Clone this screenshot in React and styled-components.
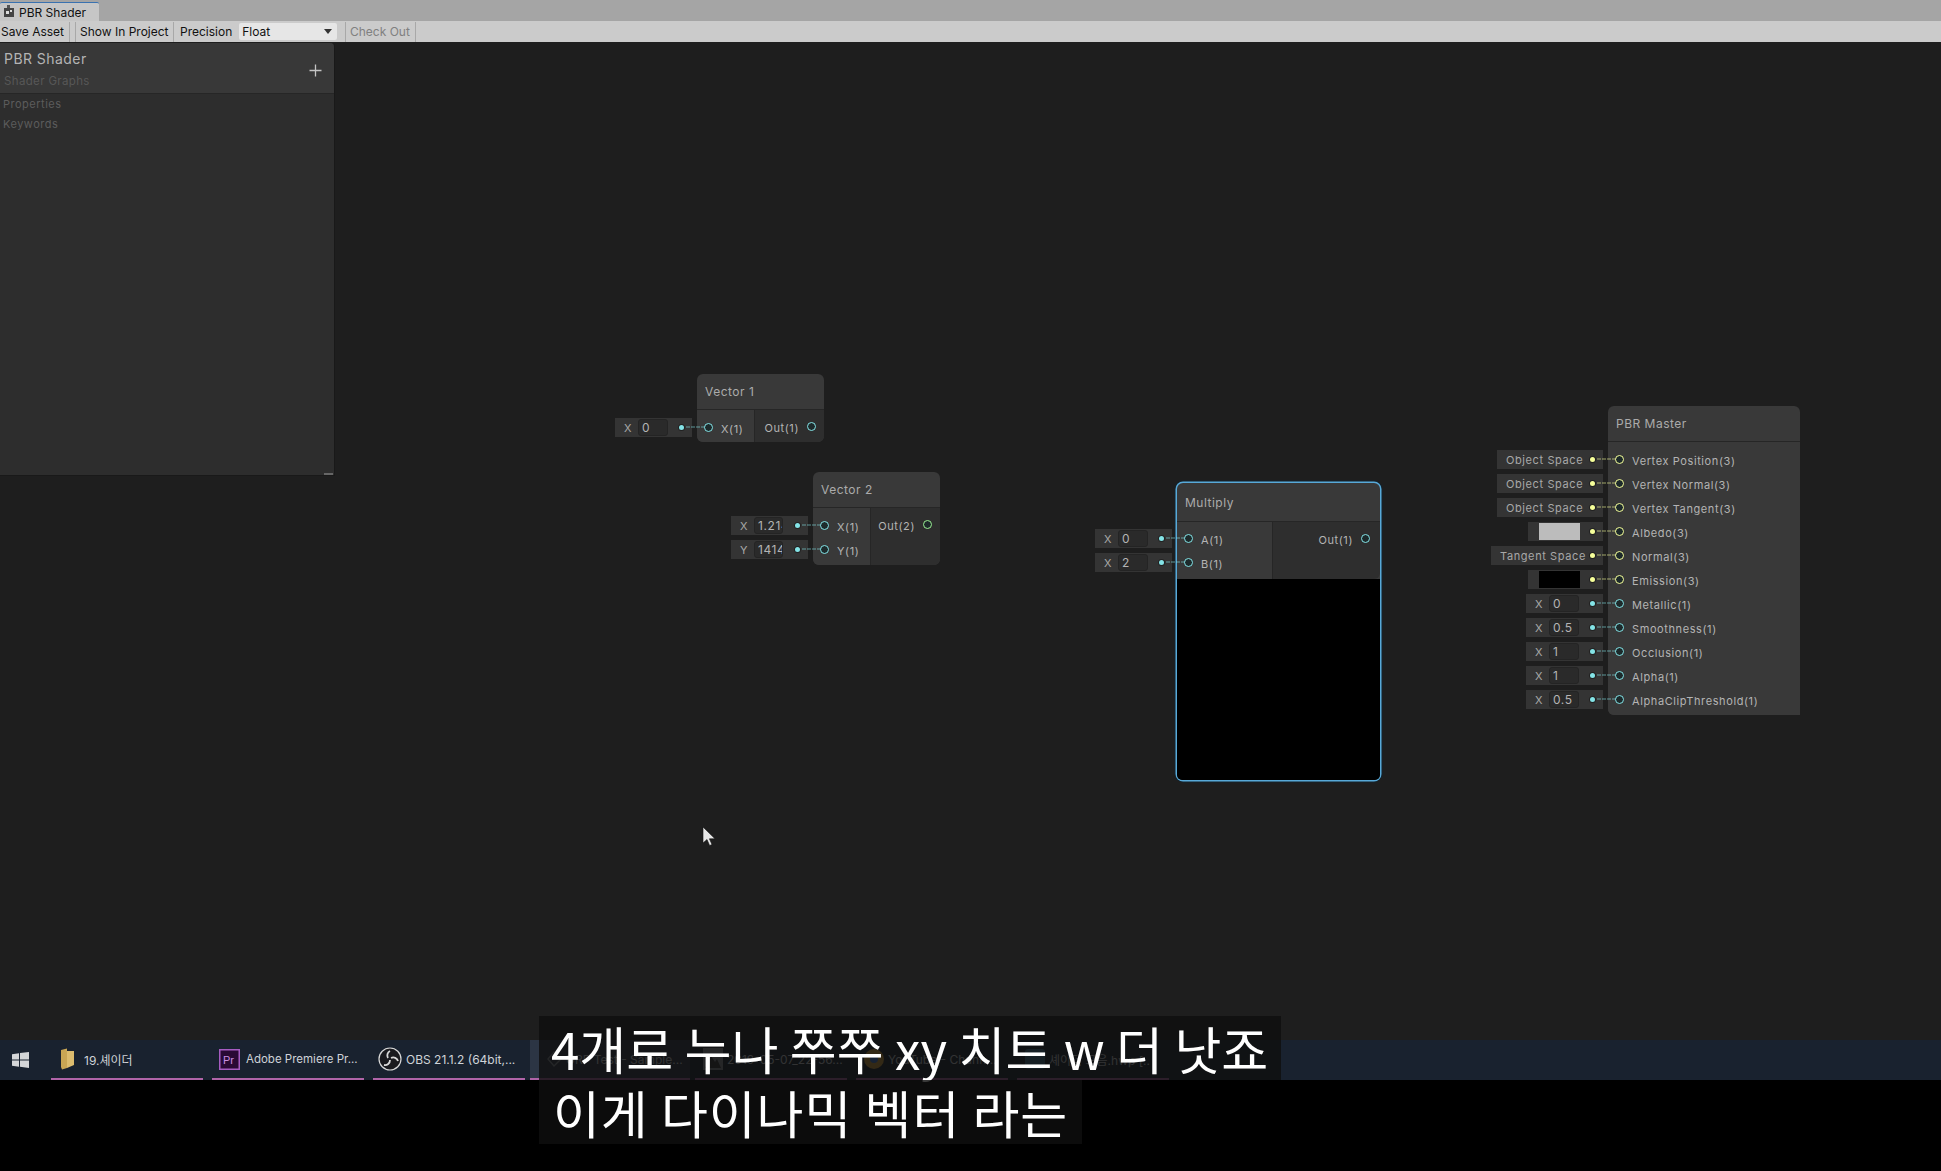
import React from 'react'
import styled, { createGlobalStyle, css } from 'styled-components'

const GlobalStyle = createGlobalStyle`
  html, body { margin: 0; padding: 0; background: #000; }
  * { box-sizing: border-box; }
`

const TEAL = '#84e4e7'
const YELLOW = '#f6ff9a'
const GREEN = '#9aef92'

const Page = styled.div`
  position: relative;
  width: 1941px;
  height: 1171px;
  display: flex;
  flex-direction: column;
  overflow: hidden;
  background: #000;
  font-family: Inter, 'Liberation Sans', 'Noto Sans CJK KR', sans-serif;
`

const TitleBar = styled.div`
  height: 21px;
  flex: none;
  background: #a5a5a5;
  padding-top: 2px;
  display: flex;
`

const Tab = styled.div`
  width: 99px;
  height: 19px;
  background: #c6c6c6;
  border-top: 1px solid #3a72b0;
  border-radius: 2px 2px 0 0;
  display: flex;
  align-items: center;
  gap: 4px;
  padding-left: 4px;
  font-size: 12px;
  color: #111;
`

const Toolbar = styled.div`
  height: 21px;
  flex: none;
  background: #cbcbcb;
  display: flex;
  align-items: center;
  font-size: 12px;
  color: #111;
  white-space: nowrap;
`

const ToolButton = styled.div`
  height: 20px;
  flex: none;
  display: flex;
  align-items: center;
  padding: 0 ${(p) => p.$pad || 5}px;
  width: ${(p) => p.$width}px;
  border-right: 1px solid #a8a8a8;
  color: ${(p) => (p.$disabled ? '#808080' : '#111')};
`

const Gap = styled.div`
  width: ${(p) => p.$width}px;
  flex: none;
  height: 20px;
  border-right: ${(p) => (p.$line ? '1px solid #a8a8a8' : 'none')};
`

const Select = styled.div`
  width: 98px;
  flex: none;
  height: 17px;
  margin-left: 7px;
  background: #e6e6e6;
  border-radius: 2px;
  display: flex;
  align-items: center;
  justify-content: space-between;
  padding: 0 5px 0 3px;
`

const Caret = styled.div`
  width: 0;
  height: 0;
  border-left: 4px solid transparent;
  border-right: 4px solid transparent;
  border-top: 5px solid #333;
`

const Canvas = styled.div`
  position: relative;
  flex: 1;
  background: #1e1e1e;
`

const Blackboard = styled.div`
  position: absolute;
  left: 0;
  top: 1px;
  width: 335px;
  height: 433px;
  background: #2d2d2d;
  border-right: 1px solid #191919;
  border-bottom: 1px solid #191919;
  border-radius: 0 4px 0 0;
`

const BoardHead = styled.div`
  position: relative;
  height: 51px;
  background: #383838;
  border-bottom: 1px solid #262626;
  border-radius: 0 4px 0 0;
  padding: 6px 4px;
`

const BoardTitle = styled.div`
  font-size: 14px;
  line-height: 19px;
  letter-spacing: 0.45px;
  color: #b4b4b4;
`

const BoardSub = styled.div`
  margin-top: 6px;
  font-size: 11.5px;
  line-height: 14px;
  letter-spacing: 0.35px;
  color: #575757;
`

const PlusIcon = styled.svg`
  position: absolute;
  right: 12px;
  top: 21px;
`

const BoardList = styled.div`
  display: flex;
  flex-direction: column;
  gap: 6px;
  padding: 3px 3px;
`

const BoardItem = styled.div`
  font-size: 11px;
  line-height: 14px;
  letter-spacing: 0.5px;
  color: #5c5c5c;
`

const ResizeGrip = styled.div`
  position: absolute;
  right: 1px;
  bottom: 0;
  width: 9px;
  height: 2px;
  background: #666;
`

const Node = styled.div`
  position: absolute;
  left: ${(p) => p.$x}px;
  top: ${(p) => p.$y}px;
  width: ${(p) => p.$w}px;
  background: #393939;
  border-radius: 6px;
  color: #b4b4b4;
  font-size: 11px;
  letter-spacing: 0.6px;
  ${(p) =>
    p.$selected &&
    css`
      box-shadow: 0 0 0 1.5px #58a9d8, 0 0 0 2.5px #14232c;
    `}
`

const NodeTitle = styled.div`
  height: ${(p) => p.$h || 36}px;
  display: flex;
  align-items: center;
  padding-left: 8px;
  font-size: 12px;
  letter-spacing: 0.5px;
  color: #ababab;
  border-bottom: 1px solid #262626;
`

const NodeBody = styled.div`
  display: flex;
  border-radius: 0 0 6px 6px;
  overflow: visible;
`

const Inputs = styled.div`
  width: ${(p) => (p.$w ? `${p.$w}px` : 'auto')};
  flex: ${(p) => (p.$w ? 'none' : 1)};
  padding: ${(p) => p.$pad || 4}px 0 ${(p) => p.$bottom || 0}px;
  background: #393939;
  border-radius: 0 0 0 6px;
`

const Outputs = styled.div`
  flex: 1;
  padding: ${(p) => p.$top || 4}px ${(p) => p.$right || 0}px 0 0;
  background: #2e2e2e;
  border-left: 1px solid #262626;
  border-radius: 0 0 6px 0;
`

const Row = styled.div`
  position: relative;
  height: 24px;
  display: flex;
  align-items: center;
  justify-content: ${(p) => (p.$out ? 'flex-end' : 'flex-start')};
  gap: 8px;
  padding: ${(p) => (p.$out ? '0 8px 0 0' : '0 0 0 7px')};
`

const Ring = styled.div`
  width: 9px;
  height: 9px;
  margin-top: -2px;
  border-radius: 50%;
  border: 1.5px solid ${(p) => p.$color};
  background: #1d2a2b;
  flex: none;
`

const Label = styled.span`
  white-space: nowrap;
  padding-top: 2px;
`

const Field = styled.div`
  position: absolute;
  right: calc(100% + 5px);
  top: 2px;
  width: ${(p) => p.$w}px;
  height: 19px;
  background: #343434;
  display: flex;
  align-items: center;
  font-size: 11px;
  color: #a8a8a8;
`

const Axis = styled.span`
  width: 23px;
  flex: none;
  text-align: center;
  padding-left: 3px;
`

const NumBox = styled.div`
  width: ${(p) => p.$w || 30}px;
  height: 17px;
  background: #2a2a2a;
  border: 1px solid #242424;
  border-radius: 3px;
  padding-left: 3px;
  line-height: 15px;
  font-size: 12px;
  color: #b4b4b4;
  overflow: hidden;
  white-space: nowrap;
`

const FieldText = styled.span`
  padding-left: ${(p) => p.$pad}px;
  white-space: nowrap;
`

const Swatch = styled.div`
  width: 41px;
  height: 17px;
  margin-left: 11px;
  background: ${(p) => p.$color};
`

const Dot = styled.div`
  position: absolute;
  right: 8px;
  top: 7px;
  width: 5px;
  height: 5px;
  border-radius: 50%;
  background: ${(p) => p.$color};
  box-shadow: 0 0 0 1px #222;
`

const Wire = styled.div`
  position: absolute;
  left: calc(100% - 6px);
  top: 8px;
  width: 19px;
  height: 2px;
  background: repeating-linear-gradient(90deg, ${(p) => p.$color} 0 4px, transparent 4px 5px);
  opacity: 0.3;
`

const Preview = styled.div`
  height: 201px;
  background: #000;
  border-radius: 0 0 5px 5px;
`

const Cursor = styled.svg`
  position: absolute;
  left: 702px;
  top: 785px;
`

const Taskbar = styled.div`
  position: relative;
  height: 40px;
  flex: none;
  background: #19222f;
  display: flex;
  padding-left: 51px;
  gap: 9px;
`

const WinLogo = styled.svg`
  position: absolute;
  left: 12px;
  top: 12px;
`

const TaskItem = styled.div`
  width: ${(p) => p.$w || 152}px;
  flex: none;
  margin-left: ${(p) => p.$ml || 0}px;
  height: 40px;
  display: flex;
  align-items: center;
  gap: ${(p) => p.$gap || 4}px;
  padding: 0 0 0 ${(p) => p.$pad || 6}px;
  font-size: ${(p) => p.$size || 12}px;
  color: #cfd3d8;
  white-space: nowrap;
  background: ${(p) => (p.$active ? '#2c3544' : 'transparent')};
  border-bottom: 2px solid #b064a8;
`

const BottomBand = styled.div`
  height: 91px;
  flex: none;
  background: #000;
`

const Subtitles = styled.div`
  position: absolute;
  left: 539px;
  top: 1016px;
  display: flex;
  flex-direction: column;
  align-items: flex-start;
`

const SubtitleLine = styled.div`
  height: 64px;
  padding: 0 ${(p) => p.$right}px 0 ${(p) => p.$left}px;
  background: rgba(15, 15, 15, 0.82);
  color: #fff;
  font-family: 'Noto Sans CJK KR', sans-serif;
  font-size: 51px;
  line-height: 64px;
  letter-spacing: ${(p) => p.$spacing || 0}px;
  white-space: nowrap;
`

const PortField = ({ field, color }) => (
  <Field $w={field.w}>
    {field.kind === 'num' && <Axis>{field.axis}</Axis>}
    {field.kind === 'num' && <NumBox $w={field.box}>{field.value}</NumBox>}
    {field.kind === 'text' && <FieldText $pad={field.pad}>{field.value}</FieldText>}
    {field.kind === 'color' && <Swatch $color={field.color} />}
    <Dot $color={color} />
    <Wire $color={color} />
  </Field>
)

const InPort = ({ label, color, field }) => (
  <Row>
    {field && <PortField field={field} color={color} />}
    <Ring $color={color} />
    <Label>{label}</Label>
  </Row>
)

const OutPort = ({ label, color }) => (
  <Row $out>
    <Label>{label}</Label>
    <Ring $color={color} />
  </Row>
)

const num = (axis, value, box) => ({ kind: 'num', axis, value, box, w: 77 })
const text = (value, w, pad) => ({ kind: 'text', value, w, pad })
const swatch = (color) => ({ kind: 'color', color, w: 75 })

const masterPorts = [
  ['Vertex Position(3)', YELLOW, text('Object Space', 106, 9)],
  ['Vertex Normal(3)', YELLOW, text('Object Space', 106, 9)],
  ['Vertex Tangent(3)', YELLOW, text('Object Space', 106, 9)],
  ['Albedo(3)', YELLOW, swatch('#bcbcbc')],
  ['Normal(3)', YELLOW, text('Tangent Space', 112, 9)],
  ['Emission(3)', YELLOW, swatch('#000')],
  ['Metallic(1)', TEAL, num('X', '0')],
  ['Smoothness(1)', TEAL, num('X', '0.5')],
  ['Occlusion(1)', TEAL, num('X', '1')],
  ['Alpha(1)', TEAL, num('X', '1')],
  ['AlphaClipThreshold(1)', TEAL, num('X', '0.5')],
]

const App = () => {
  return (
    <Page>
      <GlobalStyle />
      <TitleBar>
        <Tab>
          <svg width="11" height="14" viewBox="0 0 11 14">
            <rect x="0" y="3" width="10" height="9" fill="#444" />
            <rect x="3" y="0" width="3" height="3" fill="#555" />
            <rect x="2" y="6" width="3" height="3" fill="#ddd" />
            <rect x="6" y="5" width="2" height="2" fill="#ddd" />
          </svg>
          PBR Shader
        </Tab>
      </TitleBar>
      <Toolbar>
        <ToolButton $width={70} $pad={1}>Save Asset</ToolButton>
        <Gap $width={6} $line />
        <ToolButton $width={98} $pad={4}>Show In Project</ToolButton>
        <ToolButton $width={172} $pad={6}>
          Precision
          <Select>
            Float
            <Caret />
          </Select>
        </ToolButton>
        <ToolButton $width={70} $pad={4} $disabled>Check Out</ToolButton>
      </Toolbar>
      <Canvas>
        <Node $x={697} $y={332} $w={127}>
          <NodeTitle>Vector 1</NodeTitle>
          <NodeBody>
            <Inputs $w={57} $pad={6} $bottom={2}>
              <InPort label="X(1)" color={TEAL} field={num('X', '0')} />
            </Inputs>
            <Outputs $top={5}>
              <OutPort label="Out(1)" color={TEAL} />
            </Outputs>
          </NodeBody>
        </Node>

        <Node $x={813} $y={430} $w={127}>
          <NodeTitle>Vector 2</NodeTitle>
          <NodeBody>
            <Inputs $w={57} $pad={6} $bottom={3}>
              <InPort label="X(1)" color={TEAL} field={num('X', '1.214', 29)} />
              <InPort label="Y(1)" color={TEAL} field={num('Y', '1414', 29)} />
            </Inputs>
            <Outputs $top={5}>
              <OutPort label="Out(2)" color={GREEN} />
            </Outputs>
          </NodeBody>
        </Node>

        <Node $x={1177} $y={441} $w={203} $selected>
          <NodeTitle $h={39}>Multiply</NodeTitle>
          <NodeBody>
            <Inputs $w={95} $pad={5} $bottom={4}>
              <InPort label="A(1)" color={TEAL} field={num('X', '0')} />
              <InPort label="B(1)" color={TEAL} field={num('X', '2')} />
            </Inputs>
            <Outputs $top={5} $right={2}>
              <OutPort label="Out(1)" color={TEAL} />
            </Outputs>
          </NodeBody>
          <Preview />
        </Node>

        <Node $x={1608} $y={364} $w={192}>
          <NodeTitle>PBR Master</NodeTitle>
          <Inputs $pad={6} $bottom={3}>
            {masterPorts.map(([label, color, field]) => (
              <InPort key={label} label={label} color={color} field={field} />
            ))}
          </Inputs>
        </Node>

        <Blackboard>
          <BoardHead>
            <BoardTitle>PBR Shader</BoardTitle>
            <BoardSub>Shader Graphs</BoardSub>
            <PlusIcon width="13" height="13" viewBox="0 0 13 13">
              <path d="M6.5 0.5v12M0.5 6.5h12" stroke="#c4c4c4" strokeWidth="1.3" />
            </PlusIcon>
          </BoardHead>
          <BoardList>
            <BoardItem>Properties</BoardItem>
            <BoardItem>Keywords</BoardItem>
          </BoardList>
          <ResizeGrip />
        </Blackboard>

        <Cursor width="14" height="20" viewBox="0 0 14 20">
          <path d="M1 0v16l4-3.5 2.6 6 2.4-1-2.6-5.7H13z" fill="#e8e8e8" stroke="#111" strokeWidth="0.6" />
        </Cursor>
      </Canvas>
      <Taskbar>
        <WinLogo width="17" height="16" viewBox="0 0 17 16">
          <path d="M0 2.3 7 1.3v6.3H0zM8 1.1 17 0v7.6H8zM0 8.5h7v6.3l-7-1zM8 8.5h9V16l-9-1.2z" fill="#d4d6d8" />
        </WinLogo>
        <TaskItem $pad={9} $gap={9}>
          <svg width="15" height="22" viewBox="0 0 15 22">
            <path d="M1 2 7 0.5V20L2 21.5 1 19z" fill="#c9a654" />
            <path d="M7 3h7v14l-7 3z" fill="#dcbc6e" />
          </svg>
          19.셰이더
        </TaskItem>
        <TaskItem $pad={7} $gap={6} $size={11.5}>
          <svg width="21" height="21" viewBox="0 0 21 21">
            <rect x="0.75" y="0.75" width="19.5" height="19.5" fill="#2a0a34" stroke="#a65cc0" strokeWidth="1.5" />
            <text x="4" y="15" fontSize="11" fill="#c98fe0" fontFamily="Liberation Sans">Pr</text>
          </svg>
          Adobe Premiere Pr...
        </TaskItem>
        <TaskItem $pad={5}>
          <svg width="24" height="24" viewBox="0 0 24 24">
            <circle cx="12" cy="12" r="11" fill="#1a1a1e" stroke="#d8d8d8" strokeWidth="1.2" />
            <path d="M12 4a5 5 0 0 0-2 7M20 14a5 5 0 0 0-7-3M6 18a5 5 0 0 0 6-5" fill="none" stroke="#d8d8d8" strokeWidth="1.8" />
          </svg>
          OBS 21.1.2 (64bit,...
        </TaskItem>
        <TaskItem $w={160} $ml={-4} $pad={16} $active>
          <svg width="16" height="16" viewBox="0 0 16 16">
            <path d="M8 1 15 8 8 15 2 8z" fill="none" stroke="#8a8f96" strokeWidth="1.4" />
          </svg>
          URP Test - Sample...
        </TaskItem>
        <TaskItem $ml={-4} $pad={8}>
          <svg width="20" height="22" viewBox="0 0 20 22">
            <rect width="20" height="22" fill="#8a8f96" />
            <path d="M2 20 8 8l4 6 2-3 4 9z" fill="#333" />
          </svg>
          2019-05-07_22-56...
        </TaskItem>
        <TaskItem $pad={8}>
          <svg width="20" height="20" viewBox="0 0 20 20">
            <circle cx="10" cy="10" r="10" fill="#d9a23a" />
            <circle cx="10" cy="10" r="4" fill="#3f78d8" />
          </svg>
          YouTube - Chann...
        </TaskItem>
        <TaskItem $pad={8}>
          <svg width="20" height="20" viewBox="0 0 20 20">
            <rect width="20" height="20" rx="3" fill="#3a6a88" />
          </svg>
          셰이더 모음.hwp [..
        </TaskItem>
      </Taskbar>
      <BottomBand />
      <Subtitles>
        <SubtitleLine $left={12} $right={13}>4개로 누나 쭈쭈 xy 치트 w 더 낫죠</SubtitleLine>
        <SubtitleLine $left={14} $right={14} $spacing={0.9}>이게 다이나믹 벡터 라는</SubtitleLine>
      </Subtitles>
    </Page>
  )
}

export default App
